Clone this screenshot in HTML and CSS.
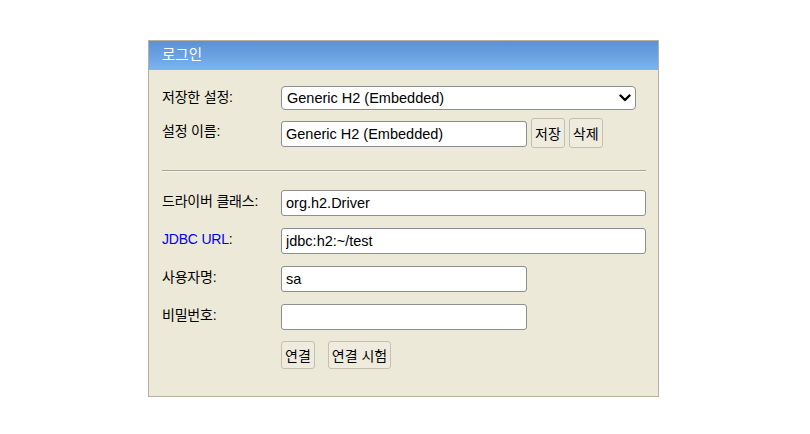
FILE: index.html
```html
<!DOCTYPE html>
<html lang="ko">
<head>
<meta charset="utf-8">
<title>로그인</title>
<link rel="stylesheet" href="styles.css">
</head>
<body>
<div class="panel">
  <div class="header">로그인</div>
  <form class="body">
    <div class="row row-select">
      <label class="label">저장한 설정:</label>
      <div class="select">
        <span>Generic H2 (Embedded)</span>
        <svg class="chev" width="12" height="8" viewBox="0 0 12 8"><path d="M1.5 1.5 L6 6 L10.5 1.5" fill="none" stroke="#000" stroke-width="2.4" stroke-linecap="round" stroke-linejoin="round"/></svg>
      </div>
    </div>
    <div class="row row-name">
      <label class="label">설정 이름:</label>
      <div class="field">
        <input class="input short" type="text" value="Generic H2 (Embedded)">
        <button type="button" class="btn">저장</button>
        <button type="button" class="btn">삭제</button>
      </div>
    </div>
    <hr class="sep">
    <div class="row">
      <label class="label">드라이버 클래스:</label>
      <input class="input long" type="text" value="org.h2.Driver">
    </div>
    <div class="row">
      <label class="label"><a class="link">JDBC URL</a>:</label>
      <input class="input long" type="text" value="jdbc:h2:~/test">
    </div>
    <div class="row">
      <label class="label">사용자명:</label>
      <input class="input short" type="text" value="sa">
    </div>
    <div class="row">
      <label class="label">비밀번호:</label>
      <input class="input short" type="password" value="">
    </div>
    <div class="row row-actions">
      <span class="label"></span>
      <div class="actions">
        <button type="button" class="btn big">연결</button>
        <button type="button" class="btn big">연결 시험</button>
      </div>
    </div>
  </form>
</div>
</body>
</html>
```

FILE: styles.css
```css
html, body {
  margin: 0;
  padding: 0;
  background: #ffffff;
}
body {
  font-family: "Liberation Sans", "Noto Sans CJK KR", Arial, sans-serif;
  font-size: 14px;
  color: #000;
  padding: 40px 0 0 148px;
}
.panel {
  width: 509px;
  height: 355px;
  border: 1px solid #b5b1a0;
  background: #ece9d8;
}
.header {
  height: 29px;
  line-height: 28px;
  padding-left: 13px;
  color: #ffffff;
  font-size: 14.5px;
  background: linear-gradient(to bottom, #5c92d5 0%, #6aa3e3 55%, #7cb6f0 100%);
}
.body {
  display: flex;
  flex-direction: column;
  padding: 16px 0 0 13px;
}
.row {
  display: flex;
  align-items: flex-start;
  height: 38px;
}
.row-select { height: 34px; }
.row-name { height: 33px; margin-bottom: 17px; }
.row-actions { margin-top: -1px; }
.label {
  width: 119px;
  flex: none;
  padding-top: 3px;
  line-height: 17px;
  font-size: 14px;
  letter-spacing: -0.2px;
}
.link { color: #0000ee; }
.select {
  width: 355px;
  height: 24px;
  box-sizing: border-box;
  border: 1px solid #8e8e8e;
  border-radius: 4px;
  background: #fff;
  display: flex;
  align-items: center;
  justify-content: space-between;
  padding: 0 4px 0 5px;
  font-size: 14.5px;
}
.chev { display: block; }
.field {
  display: flex;
  align-items: flex-start;
}
.input {
  box-sizing: border-box;
  height: 26px;
  border: 1px solid #8e8e8e;
  border-radius: 3px;
  background: #fff;
  padding: 0 4px;
  margin: 0;
  font: inherit;
  font-size: 14.5px;
  color: #000;
  outline: none;
}
.input.short { width: 246px; }
.input.long { width: 365px; }
.row-name .input { margin-top: 1px; }
.btn {
  box-sizing: border-box;
  height: 30px;
  padding: 0 3px;
  margin: -2px 0 0 4px;
  border: 1px solid #c4c0b0;
  border-radius: 3px;
  background: #efecdf;
  font: inherit;
  font-size: 14px;
  color: #000;
}
.btn + .btn { margin-left: 4px; }
.sep {
  width: 484px;
  margin: 0 0 18px 0;
  border: none;
  border-top: 1px solid #a8a596;
  border-bottom: 1px solid #f6f4ec;
  height: 0;
}
.actions {
  display: flex;
  gap: 13px;
}
.btn.big {
  height: 28px;
  margin: 0;
  padding: 0 3px;
}
```
